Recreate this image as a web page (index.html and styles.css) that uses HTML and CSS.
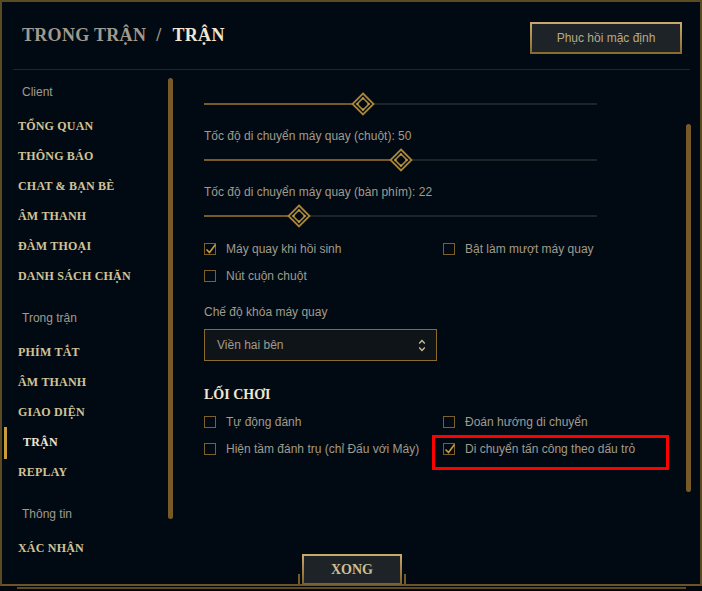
FILE: index.html
```html
<!DOCTYPE html>
<html lang="vi">
<head>
<meta charset="utf-8">
<title>Trận</title>
<link rel="stylesheet" href="styles.css">
</head>
<body>
<div class="frame">
  <header class="top">
    <h1 class="title"><span class="crumb">TRONG TRẬN</span><span class="slash">/</span><span class="current">TRẬN</span></h1>
    <button class="reset">Phục hồi mặc định</button>
  </header>
  <div class="main">
    <aside class="side">
      <nav class="nav">
        <div class="group-label first">Client</div>
        <div class="item">TỔNG QUAN</div>
        <div class="item">THÔNG BÁO</div>
        <div class="item">CHAT &amp; BẠN BÈ</div>
        <div class="item">ÂM THANH</div>
        <div class="item">ĐÀM THOẠI</div>
        <div class="item">DANH SÁCH CHẶN</div>
        <div class="group-label">Trong trận</div>
        <div class="item">PHÍM TẮT</div>
        <div class="item">ÂM THANH</div>
        <div class="item">GIAO DIỆN</div>
        <div class="item active">TRẬN</div>
        <div class="item">REPLAY</div>
        <div class="group-label">Thông tin</div>
        <div class="item">XÁC NHẬN</div>
      </nav>
      <div class="side-scroll"></div>
    </aside>
    <section class="content">
      <div class="panel">
        <div class="slider s1">
          <div class="track"><div class="fill" style="width:159px"></div></div>
          <svg class="knob" style="left:147px" viewBox="0 0 24 24" width="24" height="24"><polygon points="12,1.5 22.5,12 12,22.5 1.5,12" fill="#010a13" stroke="#a9853a" stroke-width="1.8"/><polygon points="12,6 18,12 12,18 6,12" fill="none" stroke="#a9853a" stroke-width="1.6"/><rect x="11" y="5.5" width="2" height="2" fill="#c89b3c"/><rect x="11" y="16.5" width="2" height="2" fill="#c89b3c"/><rect x="5.5" y="11" width="2" height="2" fill="#c89b3c"/><rect x="16.5" y="11" width="2" height="2" fill="#c89b3c"/></svg>
        </div>
        <div class="label l2">Tốc độ di chuyển máy quay (chuột): 50</div>
        <div class="slider s2">
          <div class="track"><div class="fill" style="width:197px"></div></div>
          <svg class="knob" style="left:185px" viewBox="0 0 24 24" width="24" height="24"><polygon points="12,1.5 22.5,12 12,22.5 1.5,12" fill="#010a13" stroke="#a9853a" stroke-width="1.8"/><polygon points="12,6 18,12 12,18 6,12" fill="none" stroke="#a9853a" stroke-width="1.6"/><rect x="11" y="5.5" width="2" height="2" fill="#c89b3c"/><rect x="11" y="16.5" width="2" height="2" fill="#c89b3c"/><rect x="5.5" y="11" width="2" height="2" fill="#c89b3c"/><rect x="16.5" y="11" width="2" height="2" fill="#c89b3c"/></svg>
        </div>
        <div class="label l3">Tốc độ di chuyển máy quay (bàn phím): 22</div>
        <div class="slider s3">
          <div class="track"><div class="fill" style="width:95px"></div></div>
          <svg class="knob" style="left:83px" viewBox="0 0 24 24" width="24" height="24"><polygon points="12,1.5 22.5,12 12,22.5 1.5,12" fill="#010a13" stroke="#a9853a" stroke-width="1.8"/><polygon points="12,6 18,12 12,18 6,12" fill="none" stroke="#a9853a" stroke-width="1.6"/><rect x="11" y="5.5" width="2" height="2" fill="#c89b3c"/><rect x="11" y="16.5" width="2" height="2" fill="#c89b3c"/><rect x="5.5" y="11" width="2" height="2" fill="#c89b3c"/><rect x="16.5" y="11" width="2" height="2" fill="#c89b3c"/></svg>
        </div>

        <div class="checks cam">
          <label class="check"><span class="box on"><svg viewBox="0 0 14 14" width="14" height="14"><path d="M2.5 7.5 L5.5 10.5 L11.5 2.5" fill="none" stroke="#c89b3c" stroke-width="1.6"/></svg></span>Máy quay khi hồi sinh</label>
          <label class="check"><span class="box"></span>Bật làm mượt máy quay</label>
          <label class="check row2"><span class="box"></span>Nút cuộn chuột</label>
        </div>

        <div class="label l4">Chế độ khóa máy quay</div>
        <div class="select">
          <span>Viền hai bên</span>
          <svg viewBox="0 0 8 13" width="8" height="13"><path d="M1.2 4.5 L4 1.5 L6.8 4.5 M1.2 8.5 L4 11.5 L6.8 8.5" fill="none" stroke="#cdbe91" stroke-width="1.3"/></svg>
        </div>

        <h2 class="section">LỐI CHƠI</h2>
        <div class="checks play">
          <label class="check"><span class="box"></span>Tự động đánh</label>
          <label class="check"><span class="box"></span>Đoán hướng di chuyển</label>
          <label class="check row2"><span class="box"></span>Hiện tầm đánh trụ (chỉ Đấu với Máy)</label>
          <label class="check row2 marked"><span class="box on"><svg viewBox="0 0 14 14" width="14" height="14"><path d="M2.5 7.5 L5.5 10.5 L11.5 2.5" fill="none" stroke="#c89b3c" stroke-width="1.6"/></svg></span>Di chuyển tấn công theo dấu trỏ</label>
        </div>
      </div>
      <div class="content-scroll"></div>
    </section>
  </div>
  <button class="done">XONG</button>
</div>
<div class="underline"></div>
</body>
</html>
```

FILE: styles.css
```css
* { box-sizing: border-box; }
html, body { margin: 0; padding: 0; }
body {
  background: #03070b;
  width: 702px;
  height: 591px;
  overflow: hidden;
  font-family: "Liberation Sans", Arial, sans-serif;
}
.frame {
  position: relative;
  width: 702px;
  height: 586px;
  background: #010a13;
  border: 2px solid #5b4a22;
  border-bottom-color: #6b5428;
}
.underline {
  margin: 1px 0 0 17px;
  width: 669px;
  height: 2px;
  background: #5b4a22;
}

/* header */
.top {
  margin: 0 10px 0 11px;
  height: 68px;
  border-bottom: 1px solid #1f272c;
  display: flex;
  justify-content: space-between;
  align-items: flex-start;
  padding: 20px 8px 0 9px;
}
.title {
  margin: 3px 0 0;
  font-family: "Liberation Serif", "Times New Roman", serif;
  font-weight: bold;
  font-size: 18px;
  line-height: 20px;
  letter-spacing: 0.3px;
  white-space: nowrap;
}
.crumb, .slash { color: #a09b8c; }
.slash { display: inline-block; margin: 0 11px 0 10px; }
.current { color: #f0e6d2; }
.reset {
  width: 152px;
  height: 32px;
  margin: 0;
  padding: 0;
  background: #1e2328;
  border: 2px solid #a8874a;
  border-image: linear-gradient(180deg, #c8aa6e, #8a6a30) 1;
  color: #b8ab82;
  font-family: "Liberation Sans", Arial, sans-serif;
  font-size: 12px;
}

/* body */
.main {
  display: flex;
  height: 514px;
}
.side {
  flex: 0 0 188px;
  display: flex;
}
.nav {
  flex: 0 0 166px;
  padding-top: 7px;
}
.group-label {
  height: 30px;
  line-height: 30px;
  padding-left: 20px;
  margin-top: 12px;
  margin-bottom: 4px;
  font-size: 12px;
  color: #a09b8c;
}
.group-label.first { margin-top: 0; }
.item {
  height: 30px;
  line-height: 30px;
  padding-left: 16px;
  font-family: "Liberation Serif", "Times New Roman", serif;
  font-weight: bold;
  font-size: 12px;
  letter-spacing: 0.2px;
  color: #d2c396;
  white-space: nowrap;
}
.item.active {
  margin-left: 2px;
  padding-left: 16px;
  border-left: 3px solid #c89b3c;
  color: #f0e6d2;
  height: 32px;
  line-height: 30px;
  margin-bottom: -2px;
}
.side-scroll {
  width: 5px;
  height: 441px;
  margin-top: 8px;
  background: #785a28;
  border-radius: 3px;
}

.content {
  flex: 1;
  display: flex;
}
.panel {
  flex: 0 0 496px;
  padding: 22px 0 0 14px;
}
.content-scroll {
  width: 5px;
  height: 368px;
  margin-top: 54px;
  background: #785a28;
  border-radius: 3px;
}

.slider {
  position: relative;
  width: 393px;
  height: 24px;
  display: flex;
  align-items: center;
}
.track {
  width: 100%;
  height: 2px;
  background: #1e2328;
}
.fill {
  height: 2px;
  background: #785a28;
}
.knob {
  position: absolute;
  top: 0;
  display: block;
}
.label {
  font-size: 12px;
  line-height: 16px;
  height: 16px;
  color: #a09b8c;
  white-space: nowrap;
}
.l2, .l3 { margin-top: 12px; }
.s2, .s3 { margin-top: 4px; }
.l4 { margin-top: 19px; }

.checks {
  display: grid;
  grid-template-columns: 239px auto;
  grid-auto-rows: 18px;
  row-gap: 9px;
}
.cam { margin-top: 12px; }
.play { margin-top: 8px; }
.check {
  position: relative;
  display: flex;
  align-items: center;
  font-size: 12px;
  color: #a09b8c;
  white-space: nowrap;
}
.cam .row2 { grid-column: 1; }
.box {
  position: relative;
  flex: 0 0 12px;
  width: 12px;
  height: 12px;
  margin-right: 10px;
  border: 1.5px solid #7d5f2a;
}
.box svg {
  position: absolute;
  left: -1.5px;
  top: -2.5px;
}
.marked::after {
  content: "";
  position: absolute;
  left: -11px;
  top: -5px;
  width: 231px;
  height: 29px;
  border: 3px solid #ff0000;
}

.select {
  margin-top: 9px;
  width: 233px;
  height: 32px;
  border: 1px solid #8a6a2e;
  background: #0f1419;
  display: flex;
  align-items: center;
  justify-content: space-between;
  padding: 0 10px 0 12px;
  font-size: 12px;
  color: #a09b8c;
}
.select svg { display: block; }

.section {
  margin: 24px 0 0;
  height: 20px;
  line-height: 20px;
  font-family: "Liberation Serif", "Times New Roman", serif;
  font-weight: bold;
  font-size: 14px;
  color: #f0e6d2;
}

.done {
  position: absolute;
  left: 300px;
  top: 552px;
  width: 100px;
  height: 31px;
  margin: 0;
  padding: 0;
  background: #1e2328;
  border: 2px solid #c8aa6e;
  border-image: linear-gradient(180deg, #c8aa6e, #7d5f2a) 1;
  font-family: "Liberation Serif", "Times New Roman", serif;
  font-weight: bold;
  font-size: 14px;
  color: #cdbe91;
}
.done::before, .done::after {
  content: "";
  position: absolute;
  top: 18px;
  width: 2px;
  height: 10px;
  background: #785a28;
}
.done::before { left: -6px; }
.done::after { right: -6px; }
```
